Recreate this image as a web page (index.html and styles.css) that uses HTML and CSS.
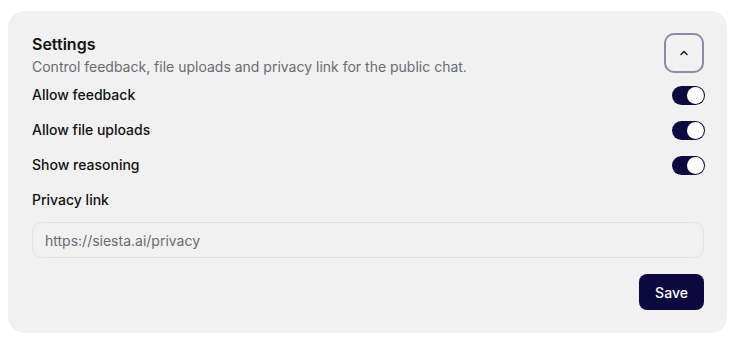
FILE: index.html
```html
<!DOCTYPE html>
<html>
<head>
<meta charset="utf-8">
<link rel="stylesheet" href="styles.css">
</head>
<body>
<section class="card">
  <div class="header">
    <div class="head-text">
      <h2 class="title">Settings</h2>
      <p class="desc">Control feedback, file uploads and privacy link for the public chat.</p>
    </div>
    <button class="collapse" aria-label="Collapse">
      <svg width="12" height="12" viewBox="0 0 12 12"><path d="M3 7.5 L6 4.5 L9 7.5" fill="none" stroke="#111" stroke-width="1.4" stroke-linecap="round" stroke-linejoin="round"/></svg>
    </button>
  </div>
  <div class="rows">
    <div class="row"><span class="label">Allow feedback</span><span class="toggle"><span class="knob"></span></span></div>
    <div class="row"><span class="label">Allow file uploads</span><span class="toggle"><span class="knob"></span></span></div>
    <div class="row"><span class="label">Show reasoning</span><span class="toggle"><span class="knob"></span></span></div>
  </div>
  <label class="field-label">Privacy link</label>
  <input class="input" type="text" placeholder="https://siesta.ai/privacy">
  <div class="actions"><button class="save">Save</button></div>
</section>
</body>
</html>
```
FILE: styles.css
```css
* { box-sizing: border-box; }
body {
  margin: 0;
  padding: 11px 7px 6px 8px;
  background: #ffffff;
  font-family: Inter, "Noto Sans", sans-serif;
  color: #111113;
}
.card {
  background: #f1f1f1;
  border-radius: 16px;
  padding: 22px 22px 23px 24px;
  display: flex;
  flex-direction: column;
  height: 322px;
  width: 719px;
}
.header {
  display: flex;
  justify-content: space-between;
  align-items: flex-start;
}
.title {
  margin: 0;
  font-size: 16px;
  line-height: 22px;
  font-weight: 600;
}
.desc {
  margin: 2px 0 0;
  font-size: 14px;
  line-height: 20px;
  color: #6b6b73;
}
.collapse {
  width: 40px;
  height: 40px;
  border: 2px solid #8b89a6;
  border-radius: 10px;
  background: transparent;
  display: flex;
  align-items: center;
  justify-content: center;
  padding: 0;
  margin-right: 1px;
}
.rows {
  display: flex;
  flex-direction: column;
  gap: 15px;
  margin-top: 8px;
}
.row {
  display: flex;
  justify-content: space-between;
  align-items: center;
  height: 20px;
}
.label, .field-label {
  font-size: 14px;
  font-weight: 500;
  line-height: 20px;
}
.toggle {
  width: 33px;
  height: 19px;
  border-radius: 10px;
  background: #0c0a3e;
  display: flex;
  align-items: center;
  justify-content: flex-end;
  padding: 1px;
}
.knob {
  width: 17px;
  height: 17px;
  border-radius: 50%;
  background: #ffffff;
}
.field-label {
  margin-top: 15px;
  display: block;
}
.input {
  margin-top: 12px;
  height: 36px;
  border: 1px solid #e2e2e4;
  border-radius: 10px;
  background: #f1f1f1;
  padding: 0 12px;
  font-family: Inter, "Noto Sans", sans-serif;
  font-size: 14px;
  color: #111;
  width: calc(100% - 1px);
  outline: none;
}
.input::placeholder { color: #6b6b73; }
.actions {
  display: flex;
  justify-content: flex-end;
  margin-top: 16px;
  padding-right: 1px;
}
.save {
  width: 65px;
  height: 36px;
  border: none;
  border-radius: 8px;
  background: #0c0a3e;
  color: #ffffff;
  font-family: Inter, "Noto Sans", sans-serif;
  font-size: 14px;
  font-weight: 500;
}
```
